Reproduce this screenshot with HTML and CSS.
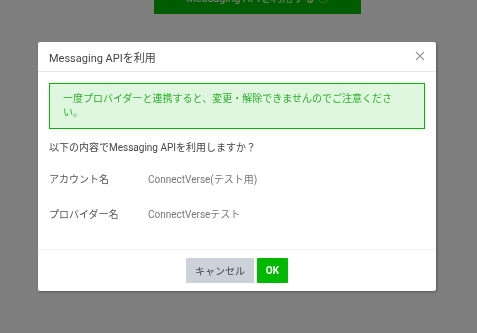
FILE: index.html
```html
<!DOCTYPE html>
<html lang="ja">
<head>
  <meta charset="UTF-8" />
  <title>Messaging APIを利用</title>
  <meta name="viewport" content="width=device-width, initial-scale=1.0" />
  <link rel="stylesheet" href="styles.css">
</head>
<body>
  <div class="page">
    <button class="page-button">Messaging APIを利用する ⓘ</button>
  </div>

  <div class="overlay">
    <div class="modal">
      <div class="modal-header">
        <span class="modal-title">Messaging APIを利用</span>
        <svg class="close" width="10" height="10" viewBox="0 0 10 10">
          <path d="M1 1 L9 9 M9 1 L1 9" stroke="#999" stroke-width="1.2" fill="none" />
        </svg>
      </div>

      <div class="modal-body">
        <div class="alert">一度プロバイダーと連携すると、変更・解除できませんのでご注意ください。</div>
        <p class="question">以下の内容でMessaging APIを利用しますか？</p>
        <div class="info-row">
          <span class="info-label">アカウント名</span>
          <span class="info-value">ConnectVerse(テスト用)</span>
        </div>
        <div class="info-row">
          <span class="info-label">プロバイダー名</span>
          <span class="info-value">ConnectVerseテスト</span>
        </div>
      </div>

      <div class="modal-footer">
        <button class="btn btn-cancel">キャンセル</button>
        <button class="btn btn-ok">OK</button>
      </div>
    </div>
  </div>
</body>
</html>
```

FILE: styles.css
```css
body {
  margin: 0;
  background: #fff;
  font-family: Roboto, "Noto Sans CJK JP", sans-serif;
  color: #333;
}

.page {
  height: 333px;
  overflow: hidden;
}

.page-button {
  display: block;
  width: 207px;
  height: 36px;
  margin: -22px 0 0 154px;
  border: none;
  background: #00b900;
  color: #fff;
  font-family: inherit;
  font-size: 11px;
  padding-top: 2px;
}

.overlay {
  position: fixed;
  inset: 0;
  background: rgba(0, 0, 0, 0.5);
}

.modal {
  width: 398px;
  margin: 42px 0 0 38px;
  background: #fff;
  border-radius: 2px;
  box-shadow: 1px 1px 3px rgba(0, 0, 0, 0.35);
}

.modal-header {
  display: flex;
  align-items: center;
  justify-content: space-between;
  height: 29px;
  padding: 0 11px 0 11px;
  border-bottom: 1px solid #e6e6e6;
}

.modal-title {
  font-size: 11px;
  color: #444;
}

.close {
  margin-top: -2px;
}

.modal-body {
  padding: 11px 11px 18px;
}

.alert {
  background: #e0f7df;
  border: 1px solid #00b900;
  color: #2bb02b;
  font-size: 10px;
  line-height: 14px;
  padding: 8px 13px;
}

.question {
  margin: 12px 0 6px;
  font-size: 10px;
  line-height: 14px;
  color: #444;
}

.info-row {
  display: flex;
  align-items: center;
  height: 35px;
  font-size: 10px;
}

.info-label {
  width: 99px;
  color: #555;
}

.info-value {
  color: #777;
}

.modal-footer {
  display: flex;
  justify-content: center;
  gap: 3px;
  padding: 8px;
  border-top: 1px solid #eee;
}

.btn {
  height: 25px;
  border: none;
  border-radius: 1px;
  font-family: inherit;
  font-size: 10px;
  cursor: pointer;
}

.btn-cancel {
  width: 68px;
  background: #cdd2da;
  color: #444;
}

.btn-ok {
  width: 31px;
  background: #00b900;
  color: #fff;
  font-weight: 700;
}
```
